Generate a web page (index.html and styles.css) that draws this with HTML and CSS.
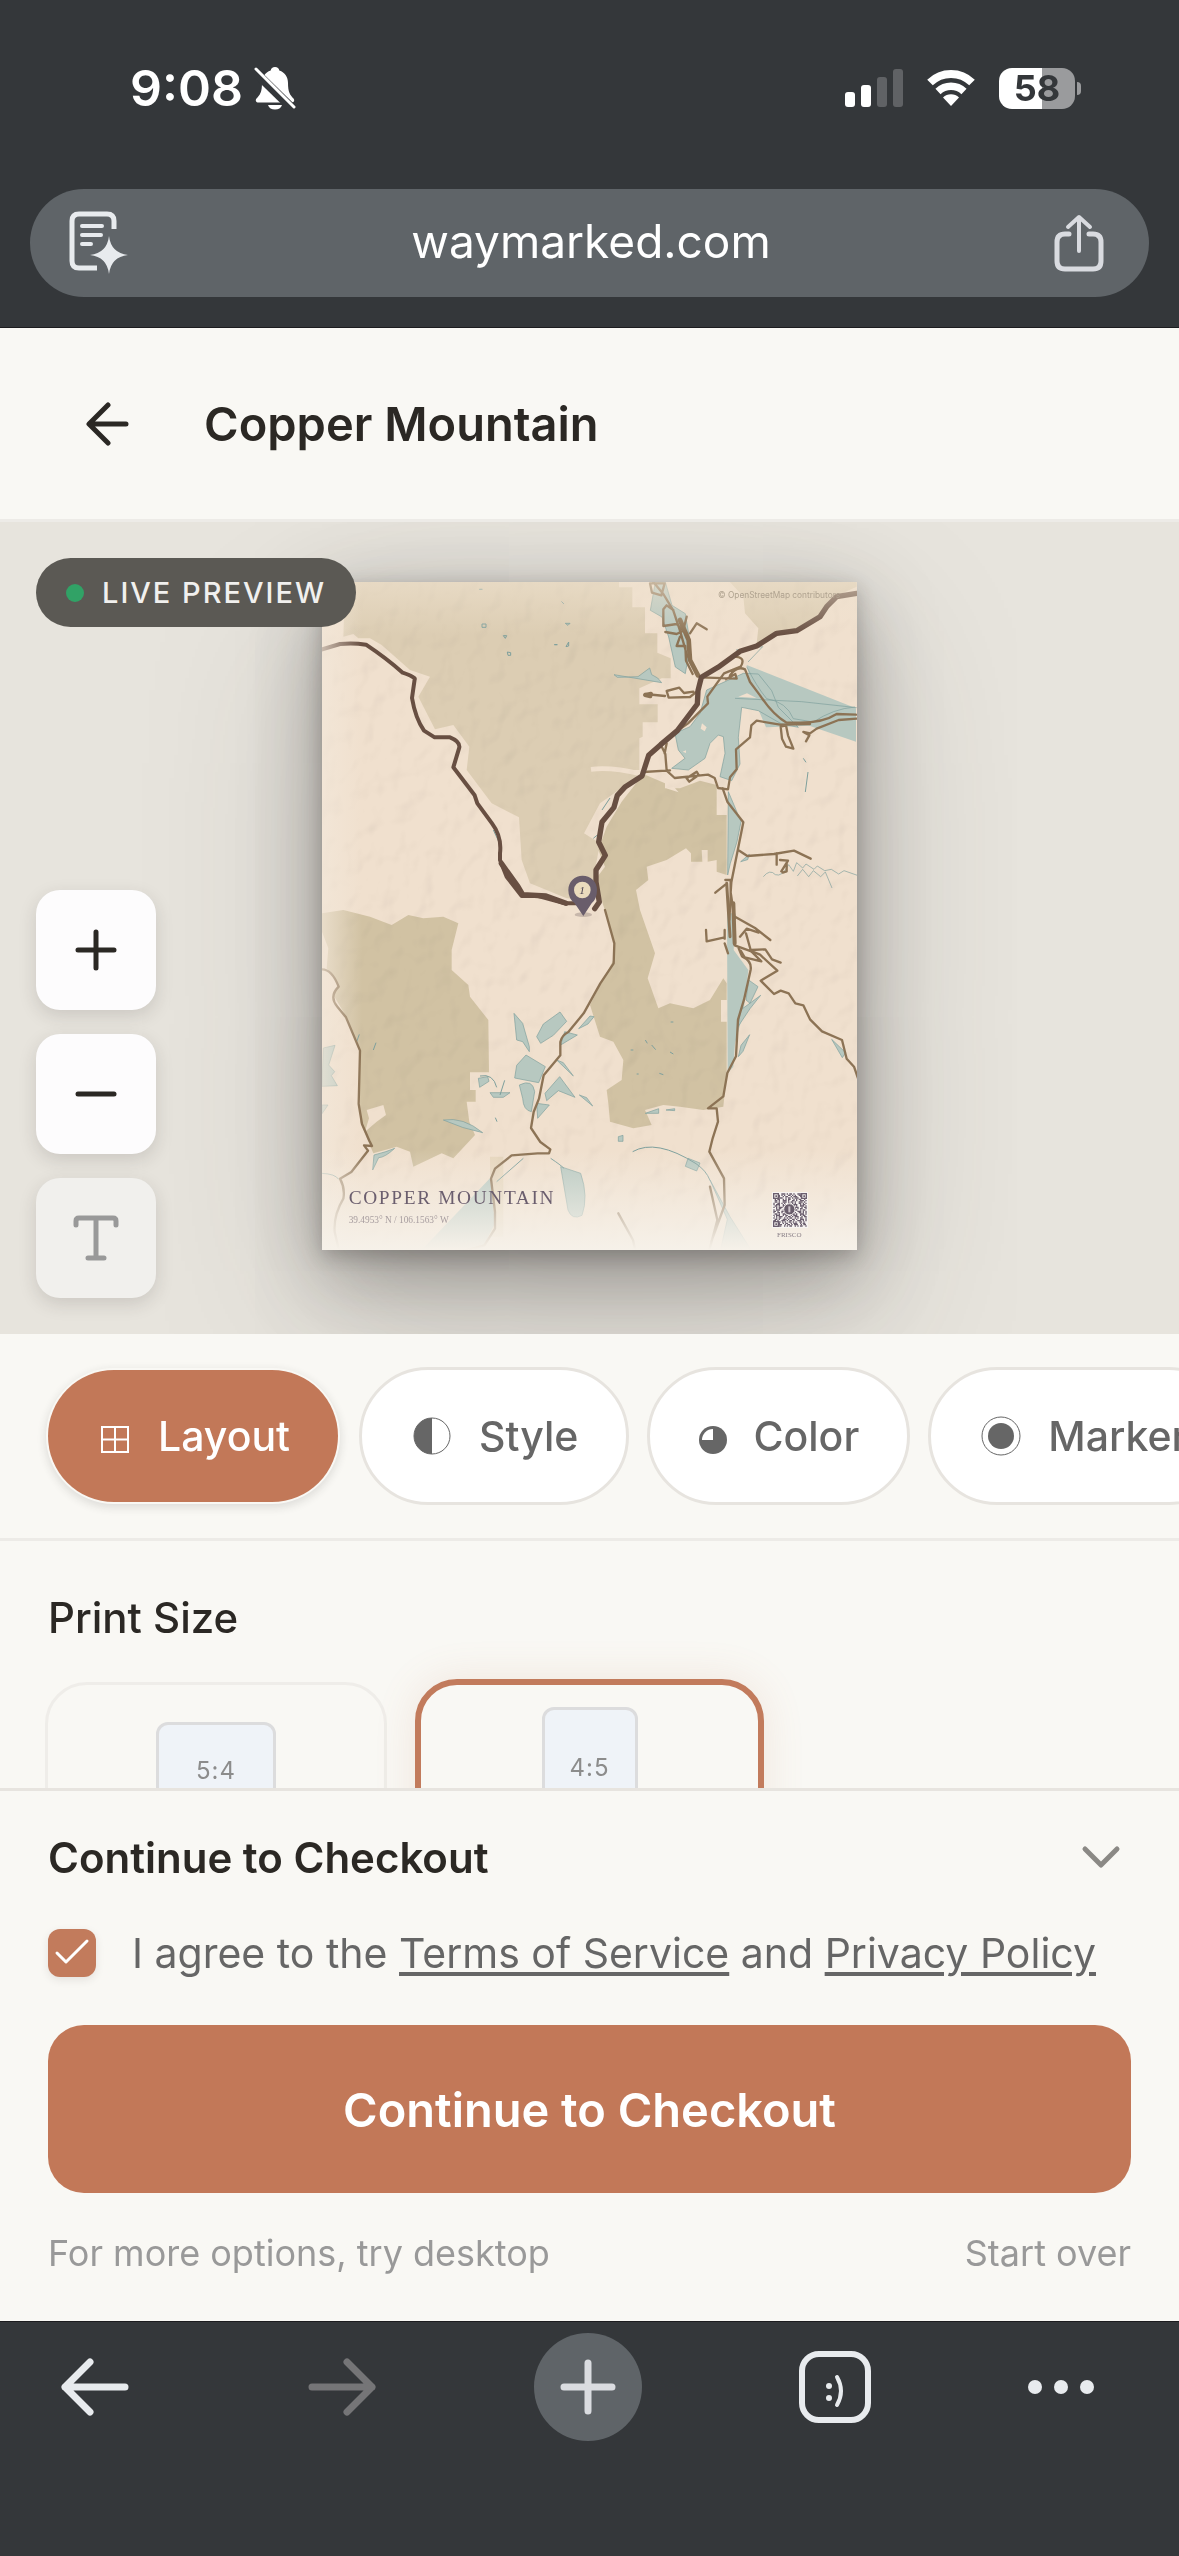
FILE: index.html
```html
<!DOCTYPE html>
<html lang="en">
	<head>
		<title>Copper Mountain</title>

		<meta charset="utf-8">
		<meta name="viewport" content="width=device-width, initial-scale=1">

		<link rel="stylesheet" href="styles.css">
	</head>
	<body>
		<div class="chrome-top">
			<div class="status-bar">
				<div class="status-left">
					<span class="clock">9:08</span>
					<svg width="42" height="44" viewBox="0 0 42 44">
						<path d="M21 1c2.500 0 4 1.500 4.300 3.500C31 6.500 34 11 34 17c0 9 2 12 5.500 15.500 1.500 2 .5 4-2 4H4.500c-2.500 0-3.500-2-2-4C6 29 8 26 8 17 8 11 11 6.500 16.700 4.500 17 2.500 18.500 1 21 1z" fill="#fff"/>
						<path d="M14 39h14c-1 3-3.500 4.500-7 4.500S15 42 14 39z" fill="#fff"/>
						<path d="M0 5l40 39" stroke="#34373a" stroke-width="9"/>
						<path d="M2 3l38 38" stroke="#fff" stroke-width="3" stroke-linecap="round"/>
					</svg>
				</div>
				<div class="status-right">
					<svg width="58" height="38" viewBox="0 0 58 38">
						<rect x="0" y="23" width="10" height="15" rx="3" fill="#fff"/>
						<rect x="16" y="16" width="10" height="22" rx="3" fill="#fff"/>
						<rect x="32" y="8" width="10" height="30" rx="3" fill="#606265"/>
						<rect x="48" y="0" width="10" height="38" rx="3" fill="#606265"/>
					</svg>
					<svg width="52" height="38" viewBox="0 0 52 38">
						<path d="M5 13.500a30 30 0 0 1 42 0" fill="none" stroke="#fff" stroke-width="8"/>
						<path d="M13 22.500a19 19 0 0 1 26 0" fill="none" stroke="#fff" stroke-width="7.500"/>
						<path d="M26 37l-8-8.500a11.500 11.500 0 0 1 16 0z" fill="#fff"/>
					</svg>
					<div class="battery"><span>58</span></div>
				</div>
			</div>
			<div class="url-bar">
				<button class="icon-btn" aria-label="Page tools">
					<svg width="60" height="64" viewBox="0 0 60 64">
						<path d="M46 18V10q0-7-7-7H11q-7 0-7 7v40q0 7 7 7h18" fill="none" stroke="#e8ebee" stroke-width="5"/>
						<path d="M14 15h20M14 24h19M14 33h9" stroke="#e8ebee" stroke-width="4" stroke-linecap="round"/>
						<path d="M41 25q2 17 19 19q-17 2-19 19q-2-17-19-19q17-2 19-19z" fill="#e8ebee"/>
					</svg>
				</button>
				<span class="url">waymarked.com</span>
				<button class="icon-btn" aria-label="Share">
					<svg width="50" height="58" viewBox="0 0 50 58" fill="none" stroke="#d9dbe0" stroke-width="5" stroke-linecap="round" stroke-linejoin="round">
						<path d="M15 20h-4q-8 0-8 8v19q0 8 8 8h28q8 0 8-8V28q0-8-8-8h-4"/>
						<path d="M25 37V4M14 13L25 3l11 10" stroke-width="4"/>
					</svg>
				</button>
			</div>
		</div>

		<header class="page-header">
			<button class="icon-btn" aria-label="Back">
				<svg width="44" height="44" viewBox="0 0 44 44" fill="none" stroke="#2b2824" stroke-width="5" stroke-linecap="round" stroke-linejoin="round">
					<path d="M40 22H4M22 3L3 22l19 19"/>
				</svg>
			</button>
			<h1>Copper Mountain</h1>
		</header>

		<section class="preview">
			<svg class="map" viewBox="36 36 1605 2004">
				<defs>
					<filter id="relief" x="0" y="0" width="100%" height="100%">
						<feTurbulence type="fractalNoise" baseFrequency="0.017 0.014" numOctaves="2" seed="8"/>
						<feDiffuseLighting surfaceScale="14" lighting-color="#fff" diffuseConstant="1.200">
							<feDistantLight azimuth="225" elevation="55"/>
						</feDiffuseLighting>
					</filter>
					<linearGradient id="fade" x1="0" y1="0" x2="0" y2="1">
						<stop offset="0" stop-color="#f6f1e9" stop-opacity="0"/>
						<stop offset="1" stop-color="#f6f1e9"/>
					</linearGradient>
					<linearGradient id="fadeTop" x1="0" y1="1" x2="0" y2="0">
						<stop offset="0" stop-color="#efe2cf" stop-opacity="0"/>
						<stop offset="1" stop-color="#efe2cf" stop-opacity=".6"/>
					</linearGradient>
					<linearGradient id="fadeLeft">
						<stop offset="0" stop-color="#f3e8da" stop-opacity=".7"/>
						<stop offset="1" stop-color="#f3e8da" stop-opacity="0"/>
					</linearGradient>
				</defs>

				<rect x="36" y="36" width="1605" height="2004" fill="#f0e0ce"/>

				<!-- forest -->
				<path fill="#dccdb3" d="M105 36L100 200l30-8l15 13h35l35 20l85 75l60 20l-35 60l50 98l55-13l48 65l-8 70l75 100l82 42l8 128l25 70l110 45l85 5L855 900l15-80l-48-30l48-90l70-50l60-45L843 600L988 600V505l10-5v-43h45v-54h-55v-48l67-30h27v-60l-40-17v-58h-37v-78h-38V52h-40V36z"/>
				<path fill="#dccdb3" d="M1260 36l40 44l5 50l40 45l-5 45l110-40l90-50l45-55l55-25V36z"/>
				<path fill="#d1c2a3" d="M1000 612l65 28v15h45l60-23l50 13v90h30v180l-30-10v-35l-27 5v-35h-18l2 35h-34v-25l-15-15l-58 35l-60 20l5 40l-37 30l12 60l45 130l-22 75l32 90l35-15l70 15l50-25l40-65l10 15v50h-17v65h17v155l-10 100l-60 10l-70-10l-50-5l-55 15l20 45l-55 10l-70-20l-5-55l-5-40l45-30l5-60l-30-55l-40-15l-30-95l70-135l5-50l-40-130l-20-60l30-40l-20-50l25-70l45-75z"/>
				<path fill="#d1c2a3" d="M36 1030l64-10l80 20l65 25l50-30l45 10l60-5l45 20l-20 80v60l50 45l5 35l55 70l2 157h-57v53h17v35h-27l8 60l17 40l-65 70l-35-15l-85 40l-10-45l-40-15l-70 20l-40-95v-210l-50-120l-30-50l15-35l-35-45l5-60l-19-50z"/>
				<path fill="#dfceb2" d="M540 1760h40v240h-38z" opacity=".6"/>
				<path fill="#f0e0ce" d="M170 1620l50-15l8 30l-28 20l-35 30l12-40z"/>
				<path fill="none" stroke="#f0e0ce" stroke-width="14" d="M843 598q60-8 150 14"/>

				<rect class="relief" x="36" y="36" width="1605" height="2004" filter="url(#relief)"/>

				<!-- lakes and rivers -->
				<g fill="#b7c8c0" stroke="#7d9f9c" stroke-width="2">
					<path d="M1036 36h30l20 70l40 25l15 90l-15 90l-30-20l-20-90l-20-60l-35-20z"/>
					<path d="M912 314l10 8l62-2l35-26l6 20l18 10l12 14z"/>
					<path stroke="none" d="M1310 285l328 130v100l-140-48l-130 5l-30-70z"/>
					<path d="M1300 310l-110 50l-20 70l-30 40l-45 20l10 50l20 25l-40 30l50 5l50-35l15-45l25-25l15 5l5 50l-15 70l35 12l25-50l-5-80l10-90l50 10l70 40l50 10l-60-60l-20-50l-40-50z"/>
					<path d="M1255 665l38 90l-12 60l-20 65l-8 35z"/>
					<path d="M1251 1030h25l-5 110l44 60l-15 130l-25 90l-5 70l-17 20z" stroke="none"/>
					<path d="M1316 1230l28 20l-24 50l-12-10zM1284 1370l8-50l60-44l-32 40zM1285 1460l8-34l26-32l-20 50zM1565 1408l42 40l-10 15z"/>
					<path d="M1292 875l26-22l-5 16z"/>
					<path d="M75 1426l-35 8l-4 115l46-2l-18-30l10-12l-18-20zM36 1605l18 0l-18 26z"/>
					<path d="M612 1330l26 30l20 70v15l-20-30l-18-5zM680 1400l20-38l50-36l20 28l-40 42l-38 24zM648 1455l58 35l-20 48l-72-14l6-38zM628 1545q40-20 46 20l-10 60q-24-4-26-40zM705 1570l44-50l46 62l-50-20l-35 30zM680 1600l38 5l-35 40zM752 1425l12-40l38 10zM740 1470l20 8l30 40zM806 1376l34-38l12 2l-18 22z"/>
					<path d="M505 1525l28-5l4 14l-28 18zM540 1568h60l-20 14h-30zM400 1650q60-10 118 38q-60-12-118-38zM188 1800l4-45q40-10 62-20q-30 28-48 28z"/>
					<path d="M752 1790l60 20q24 70 4 126q-30 16-42-16z"/>
					<path d="M1006 1630l40-14v14zM1068 1620l26-4v6zM808 1575l22 8l18 25zM1134 1765l36 14l-10 24l-34-14zM925 1700l14-4v18h-14zM1200 1830l60 110l62 98h-90l20-90z"/>
					<path stroke="none" d="M540 1825L335 2040h180l40-80z"/>
				</g>
				<g fill="none" stroke="#7d9f9c" stroke-width="3">
					<path d="M516 162h12v10h-12zM580 197h10l-4 8zM592 246l10 2v8h-8zM766 160l14 0l-6 6zM768 230l8-14v12zM733 224l9 0zM755 95l6 6zM508 58h9z"/>
					<path d="M535 740l12 18M550 780l16 34M876 720l24-36M850 805l12-10M1480 565l8 12M1494 606l-8 60"/>
					<path d="M1006 1410l6 10M1025 1425l12 14M962 1440h8M1080 1446l10 6M1082 1356h8M980 1512h6M1048 1510l12 4M556 1643l5 12M140 1415l8-22M190 1440l8-22"/>
					<path d="M968 1745q70-40 190 36q30 20 42 50M722 1765q30 20 40 30M560 1835l80-70M36 1810q40 2 50 18M570 1575l14-44M510 1518q40-8 50 34"/>
					<path stroke-width="2" d="M1360 920q20-24 36-6q20 8 40-30l14 20l10-26l18 16l10-12l24 16l10-10l22 14l20-4l22 14l16-10l40 14M1462 918l16-20l18 22l14-18l22 18l14-14l20 48M1275 385l200 10l165 18M1310 290q30 60 60 96q60 10 80 60l60 10q60-40 125-45M1278 240l80-10l-44 46"/>
				</g>
				<g fill="#f0e0ce"><path d="M1285 380l26-10l28 14zM1176 460l14 12l-6 12l-12-8zM1118 545l10-4v8zM1068 655l24-4l14 16z"/></g>

				<!-- roads -->
				<g fill="none" stroke="#8c7355" stroke-width="7" stroke-linejoin="round" stroke-linecap="round">
					<path d="M1030 36l30 36l30 50l20 60l20 70l32 60M1020 40l6 28l28 8l10-36zM1090 120l-20-14l-10 12v50l40-6l20 20l-20 10l-34-6M1130 140l-10 40M1140 190l20-30l30 18M1110 200l-10 28h26l2 44l20 40"/>
					<path d="M1110 150l26 60l4 60l24 46" stroke-width="14"/>
					<path d="M1160 365l-20 16l-64 2l-6-20l38-10l14 16l28-4M1005 372l60 6M1170 322l110 4l-4-14l-28 16M1260 316q20-30 45-18l15 38l30 40q40 60 80 82h40q70 0 110-26l58 2M1270 260q40 0 22 30l-50 20l-50 70l2 20l-60 60l-34 24"/>
					<path d="M1005 375l18-4l-2 8z" stroke-width="12"/>
					<path d="M1640 446l-54 4l-66 26l-20 14l-20-4l18 10l-10 18M1500 462l-90 2l-70-12l-16 14l-4 36l-42 36l2 60l-20 24l-6 36l-30-4l-10-30l-20-10l-100 10l-24-22l-4-50l-10-20M1000 606l80-5M1130 625l30-20l6 10l-28 20zM1070 520l-6 30M1412 470l4 36l12 24l22 6l-16-40l-6-30z"/>
					<path d="M1238 655l14 40l48 62l-18 90l-18 90l-2 30l12 80M1288 842l24 16l80-6l60-10l50 24M1400 850v34M1410 870l24 2l-20 32M1430 880v24l-12 4M1246 930h16v50l-4 70M1216 968l30-24"/>
					<path d="M1250 940l10 160" stroke-width="9"/>
					<path d="M1270 1000l4 120" stroke-width="12"/>
					<path d="M1275 1040l60 34l46 36M1188 1080l2 34l54-12M1244 1080v26M1244 1120l10 30M1290 1100l20-24l36 12M1308 1090l14 50l44-2l20 30l26 10M1274 1126l50 18l30 30l-50-12l-12-20"/>
					<path d="M1320 1142l30 12l52 48l-50 30l40 40l20-10l24 8l20 30l24 6l20 42l36 36l60 26l14 56l22 24l24 70"/>
					<path d="M1286 1135l10 24q30 14 26 40l-20 90l-18 60l-6 110l-26 50l-12 70l-46 36h26l4 40l-16 50l-10 40l44 80l2 80l-40 110M1200 1850l22 100l-24 90M925 1930l44 80l6 28"/>
					<path d="M36 1198q30 0 50 52q-30 30-4 60l26 32l42 100l-4 160l10 60l22 50l8 16l-24-2l12 16l-50 64l-34 20q16 30 10 60q-30 50-26 100l14 60"/>
					<path d="M885 1020l28 100l-2 60l-40 60l-50 90l-46 56q-20 10-24 30v40l-50 60l-14 70l-16 40l-8 48l28 42l30 22l-4 12h-34l-78 6l-50 40l-12 30l12 100v50l-32 50l-80 22"/>
				</g>
				<g fill="none" stroke="#684f42" stroke-width="12" stroke-linejoin="round" stroke-linecap="round">
					<path d="M30 240l60-18q40-4 78 2q60 40 110 84q40 14 36 20l-8 56q10 60 36 98l32 20l46 0q30 12 28 30l-18 60l64 84l8 24l44 60q30 40 24 90v20l20 50l45 58l50 0l80 22h50"/>
					<path d="M574 880l50 70l14 24l70 4l60 22" stroke-width="16"/>
					<path stroke-width="16" d="M1640 70l-60 10l-30 30l-20 30l-70 42l-60 8l-60 38l-50 16l-66 48l-50 30l-10 40l-2 40l-60 80l-50 42l-36 32l-20 62l-50 32l-24 26l-10 36l-36 44l-10 60l20 40l-28 44l0 36l10 60l-14 20"/>
				</g>

				<!-- paper fades -->
				<rect x="36" y="36" width="1605" height="160" fill="url(#fadeTop)"/>
				<rect x="36" y="36" width="120" height="2004" fill="url(#fadeLeft)"/>
				<rect x="36" y="1740" width="1605" height="300" fill="url(#fade)"/>

				<!-- pin -->
				<ellipse cx="820" cy="1034" rx="26" ry="7" fill="#6a5a5a" opacity=".3"/>
				<path d="M820 1038l-26-38q-19-14-19-40a43 43 0 0 1 86 0q0 26-16 40z" fill="#695d6b"/>
				<circle cx="817" cy="960" r="25" fill="#eadbbd"/>
				<text class="pin-number" x="816" y="972" text-anchor="middle">1</text>

				<text class="osm" x="1224" y="84">© OpenStreetMap contributors</text>
				<text class="map-title" x="116" y="1902">COPPER MOUNTAIN</text>
				<text class="map-coords" x="116" y="1959">39.4953° N / 106.1563° W</text>

				<!-- qr code -->
				<rect x="1386" y="1866" width="108" height="108" fill="#f7f4f1"/>
				<g fill="none" stroke="#6b5e6e" stroke-width="4">
					<path stroke-dasharray="8 4 4 8 12 4 4 4" d="M1390 1872h100M1490 1884h-100M1394 1896h96M1490 1912h-100M1390 1924h100M1490 1940h-98M1390 1952h100M1488 1964h-98"/>
					<path stroke-dasharray="4 8 8 4 4 4" d="M1390 1876h100M1486 1888h-96M1390 1900h100M1490 1916h-96M1390 1928h100M1490 1944h-100M1392 1956h96M1490 1968h-100"/>
					<path stroke-dasharray="4 4 12 8 4 4 8 8" d="M1390 1880h100M1490 1892h-100M1390 1904h100M1490 1908h-100M1390 1920h100M1490 1932h-98M1390 1936h100M1490 1948h-100M1390 1960h100"/>
				</g>
				<g fill="#f7f4f1" stroke="#6b5e6e" stroke-width="4">
					<rect x="1391" y="1871" width="14" height="14"/>
					<rect x="1475" y="1871" width="14" height="14"/>
					<rect x="1391" y="1955" width="14" height="14"/>
				</g>
				<path d="M1396 1876h5v5h-5zM1480 1876h5v5h-5zM1396 1960h5v5h-5z" fill="#6b5e6e"/>
				<circle cx="1438" cy="1918" r="17" fill="#695d6b" stroke="#f7f4f1" stroke-width="3"/>
				<path d="M1438 1909v18" stroke="#cfc6cc" stroke-width="6"/>
				<text class="map-place" x="1438" y="2001" text-anchor="middle">FRISCO</text>
			</svg>

			<div class="live-badge"><span class="live-dot"></span>LIVE PREVIEW</div>

			<div class="map-tools">
				<button class="tool" aria-label="Zoom in">
					<svg width="42" height="42" viewBox="0 0 42 42" stroke="#2b2824" stroke-width="5" stroke-linecap="round"><path d="M3 21h36M21 3v36"/></svg>
				</button>
				<button class="tool" aria-label="Zoom out">
					<svg width="42" height="42" viewBox="0 0 42 42" stroke="#2b2824" stroke-width="5" stroke-linecap="round"><path d="M3 21h36"/></svg>
				</button>
				<button class="tool tool-off" aria-label="Edit text">
					<svg width="48" height="48" viewBox="0 0 48 48" fill="none" stroke="#999" stroke-width="5" stroke-linecap="round" stroke-linejoin="round"><path d="M4 11V7q0-3 3-3h34q3 0 3 3v4M24 4v40M16 44h16"/></svg>
				</button>
			</div>
		</section>

		<nav class="tabs">
			<button class="tab active">
				<svg width="41" height="48" viewBox="0 0 41 48" fill="none" stroke="currentColor" stroke-width="2"><path d="M6 15h26v25H6zM19 15v25M6 27.500h26"/></svg>
				Layout
			</button>
			<button class="tab">
				<svg width="48" height="48" viewBox="0 0 48 48"><circle cx="22" cy="24" r="18" fill="none" stroke="currentColor"/><path d="M22 6a18 18 0 0 0 0 36z" fill="currentColor"/></svg>
				Style
			</button>
			<button class="tab">
				<svg width="34" height="48" viewBox="0 0 34 48"><circle cx="15" cy="28" r="14" fill="currentColor"/><path d="M15 28V17a11 11 0 0 0-11 11z" fill="#fff"/></svg>
				Color
			</button>
			<button class="tab">
				<svg width="48" height="48" viewBox="0 0 48 48"><circle cx="22" cy="24" r="19" fill="none" stroke="currentColor"/><circle cx="22" cy="24" r="13" fill="currentColor"/></svg>
				Marker
			</button>
		</nav>

		<section class="panel">
			<h2>Print Size</h2>
			<div class="sizes">
				<button class="size"><span class="ratio landscape">5:4</span></button>
				<button class="size selected"><span class="ratio portrait">4:5</span></button>
			</div>
		</section>

		<section class="checkout">
			<div class="checkout-head">
				<h2>Continue to Checkout</h2>
				<button class="icon-btn" aria-label="Collapse">
					<svg width="60" height="36" viewBox="0 0 60 36" fill="none" stroke="#8b8985" stroke-width="5" stroke-linecap="round" stroke-linejoin="round"><path d="M14 10l16 16l16-16"/></svg>
				</button>
			</div>
			<div class="agree">
				<span class="check">
					<input id="agree" type="checkbox" checked>
					<svg width="48" height="48" viewBox="0 0 48 48" fill="none" stroke="#fff" stroke-width="3" stroke-linecap="round" stroke-linejoin="round"><path d="M9 24l9 9L39 12"/></svg>
				</span>
				<label for="agree">I agree to the <a href="#">Terms of Service</a> and <a href="#">Privacy Policy</a></label>
			</div>
			<button class="pay">Continue to Checkout</button>
			<div class="checkout-foot">
				<span>For more options, try desktop</span>
				<button class="start-over">Start over</button>
			</div>
		</section>

		<nav class="chrome-bottom">
			<button class="icon-btn" aria-label="Previous page">
				<svg width="72" height="60" viewBox="0 0 72 60" fill="none" stroke="#e8ebee" stroke-width="7" stroke-linecap="round" stroke-linejoin="round"><path d="M66 30H6M31 5L6 30l25 25"/></svg>
			</button>
			<button class="icon-btn" aria-label="Next page">
				<svg width="72" height="60" viewBox="0 0 72 60" fill="none" stroke="#757577" stroke-width="7" stroke-linecap="round" stroke-linejoin="round"><path d="M6 30h60M41 5l25 25l-25 25"/></svg>
			</button>
			<button class="icon-btn new-tab" aria-label="New tab">
				<svg width="56" height="56" viewBox="0 0 56 56" stroke="#dadce0" stroke-width="7" stroke-linecap="round"><path d="M4 28h48M28 4v48"/></svg>
			</button>
			<button class="icon-btn" aria-label="Open tabs">
				<svg width="74" height="74" viewBox="0 0 74 74"><rect x="4" y="4" width="66" height="66" rx="17" fill="none" stroke="#e8ebee" stroke-width="6"/><circle cx="31" cy="36" r="3" fill="#e8ebee"/><circle cx="31" cy="48" r="3" fill="#e8ebee"/><path d="M39 27q8 14 0 28" fill="none" stroke="#e8ebee" stroke-width="4" stroke-linecap="round"/></svg>
			</button>
			<button class="more" aria-label="More">
				<svg width="68" height="16" viewBox="0 0 68 16" fill="#e8ebee"><circle cx="8" cy="8" r="7"/><circle cx="34" cy="8" r="7"/><circle cx="60" cy="8" r="7"/></svg>
			</button>
		</nav>
	</body>
</html>
```
FILE: styles.css
```css
* {
	box-sizing: border-box;
}

body {
	margin: 0;
	height: 100vh;
	display: flex;
	flex-direction: column;
	background: #f9f8f4;
	color: #2b2824;
	font-family: Inter, "Liberation Sans", sans-serif;
	overflow: hidden;
}

button {
	font: inherit;
	color: inherit;
	background: none;
	border: none;
	padding: 0;
	cursor: pointer;
}

svg {
	display: block;
	flex: none;
}

h1, h2 {
	margin: 0;
	font-weight: 600;
}

h1 {
	font-size: 47px;
}

h2 {
	font-size: 42px;
}

/* browser chrome */
.chrome-top {
	background: #34373a;
	border-bottom: 1px solid #1c1c1f;
	padding: 60px 30px 30px;
}

.status-bar {
	display: flex;
	justify-content: space-between;
	align-items: center;
	height: 56px;
	margin-bottom: 73px;
	padding: 0 74px 0 100px;
}

.status-left, .status-right {
	display: flex;
	align-items: center;
}

.status-left {
	gap: 11px;
}

.status-right {
	gap: 22px;
}

.clock {
	color: #fff;
	font-size: 50px;
	font-weight: 600;
}

.battery {
	position: relative;
	width: 76px;
	height: 41px;
	border-radius: 13px;
	background: linear-gradient(to right, #fff 57%, #9a9b9d 57%);
	color: #34373a;
	font-size: 36px;
	font-weight: 700;
	line-height: 41px;
	text-align: center;
}

.battery::after {
	content: "";
	position: absolute;
	right: -6px;
	top: 14px;
	width: 4px;
	height: 13px;
	border-radius: 0 4px 4px 0;
	background: #9a9b9d;
}

.url-bar {
	display: flex;
	justify-content: space-between;
	align-items: center;
	height: 108px;
	padding: 0 45px 0 38px;
	border-radius: 54px;
	background: #5f6468;
	color: #fff;
	font-size: 46px;
}

.url {
	padding-bottom: 4px;
}

/* page */
.page-header {
	display: flex;
	align-items: center;
	gap: 74px;
	height: 194px;
	padding: 0 86px;
	border-bottom: 3px solid #edebe7;
}

.preview {
	position: relative;
	display: flex;
	justify-content: center;
	padding: 60px 0 84px;
	background: #e7e4dd;
	overflow: hidden;
}

.map {
	width: 535px;
	box-shadow: 0 60px 180px rgba(60, 55, 50, .22), 0 24px 72px rgba(40, 35, 35, .36), 0 6px 18px rgba(40, 35, 35, .25);
}

.relief {
	mix-blend-mode: multiply;
	opacity: .13;
}

.map-title {
	font-family: "Liberation Serif", serif;
	font-size: 58px;
	letter-spacing: 5px;
	fill: #6b5e6e;
}

.map-coords {
	font-family: "Liberation Serif", serif;
	font-size: 28px;
	fill: #a79d9f;
}

.map-place {
	font-family: "Liberation Serif", serif;
	font-size: 21px;
	fill: #8a8088;
}

.osm {
	font-size: 25px;
	fill: #b0a390;
}

.pin-number {
	font-family: "Liberation Serif", serif;
	font-style: italic;
	font-size: 34px;
	fill: #4c4450;
}

.live-badge {
	position: absolute;
	top: 36px;
	left: 36px;
	display: flex;
	align-items: center;
	gap: 18px;
	height: 69px;
	padding: 0 30px;
	border-radius: 35px;
	background: #5b5954;
	color: #f1f0ee;
	font-size: 29px;
	font-weight: 500;
	letter-spacing: 2px;
}

.live-dot {
	width: 18px;
	height: 18px;
	border-radius: 50%;
	background: #31a266;
}

.map-tools {
	position: absolute;
	left: 36px;
	bottom: 36px;
	display: flex;
	flex-direction: column;
	gap: 24px;
}

.tool {
	display: grid;
	place-items: center;
	width: 120px;
	height: 120px;
	border-radius: 24px;
	background: #fdfcfd;
	box-shadow: 0 6px 18px rgba(45, 42, 38, .15);
}

.tool-off {
	background: #f1f0ed;
}

.tabs {
	display: flex;
	gap: 18px;
	padding: 33px 45px;
	border-bottom: 3px solid #edebe7;
	overflow: hidden;
}

.tab {
	display: flex;
	flex: none;
	align-items: center;
	gap: 21px;
	height: 138px;
	padding: 0 48px;
	border: 3px solid #e7e4df;
	border-radius: 69px;
	background: #fff;
	color: #666;
	font-size: 41px;
	font-weight: 500;
}

.tab.active {
	border-color: transparent;
	background: #c27858 padding-box;
	box-shadow: 0 3px 9px rgba(45, 42, 38, .12);
	color: #fff;
}

.panel {
	flex: 1;
	min-height: 0;
	padding: 52px 45px 0;
	overflow: hidden;
}

.panel h2 {
	margin-bottom: 36px;
	padding-left: 3px;
	font-weight: 500;
	line-height: 50px;
}

.sizes {
	display: flex;
	align-items: flex-start;
	gap: 28px;
}

.size {
	display: flex;
	justify-content: center;
	align-items: center;
	width: 342px;
	height: 260px;
	margin-top: 3px;
	padding-bottom: 84px;
	border: 3px solid #efede9;
	border-radius: 42px;
}

.size.selected {
	width: 349px;
	margin-top: 0;
	border: 6px solid #c27b5c;
	box-shadow: 0 0 42px rgba(194, 120, 88, .14);
}

.ratio {
	display: grid;
	place-items: center;
	border: 3px solid #dcdcdd;
	border-radius: 12px;
	background: #eff3f8;
	color: #8c8c8c;
	font-size: 24px;
	letter-spacing: 1px;
}

.landscape {
	width: 120px;
	height: 96px;
}

.portrait {
	width: 96px;
	height: 120px;
}

.checkout {
	padding: 33px 48px 8px;
	border-top: 3px solid #e7e4df;
}

.checkout-head, .checkout-foot {
	display: flex;
	justify-content: space-between;
	align-items: center;
}

.checkout-head {
	height: 66px;
}

.agree {
	display: flex;
	align-items: center;
	gap: 36px;
	height: 54px;
	margin: 36px 0 45px;
	color: #666;
	font-size: 41px;
}

.agree a {
	color: inherit;
	text-underline-offset: 4px;
}

.check {
	display: grid;
}

.check input, .check svg {
	grid-area: 1 / 1;
}

.check svg {
	pointer-events: none;
}

.check input {
	appearance: none;
	width: 48px;
	height: 48px;
	margin: 0;
	border-radius: 12px;
	background: #c27b5c;
	box-shadow: 0 3px 9px rgba(45, 42, 38, .1);
}

.pay {
	display: block;
	width: 100%;
	height: 168px;
	border-radius: 36px;
	background: #c27858;
	color: #fff;
	font-size: 47px;
	font-weight: 600;
}

.checkout-foot {
	height: 120px;
	color: #999;
	font-size: 36px;
}

.chrome-bottom {
	display: flex;
	justify-content: space-between;
	align-items: flex-start;
	height: 235px;
	padding: 11px 84px 0 41px;
	border-top: 1px solid #1c1c1f;
	background: #34373a;
}

.chrome-bottom button {
	display: grid;
	place-items: center;
	height: 108px;
}

.chrome-bottom .icon-btn {
	width: 108px;
}

.chrome-bottom .new-tab {
	border-radius: 50%;
	background: #5f6468;
}
```
